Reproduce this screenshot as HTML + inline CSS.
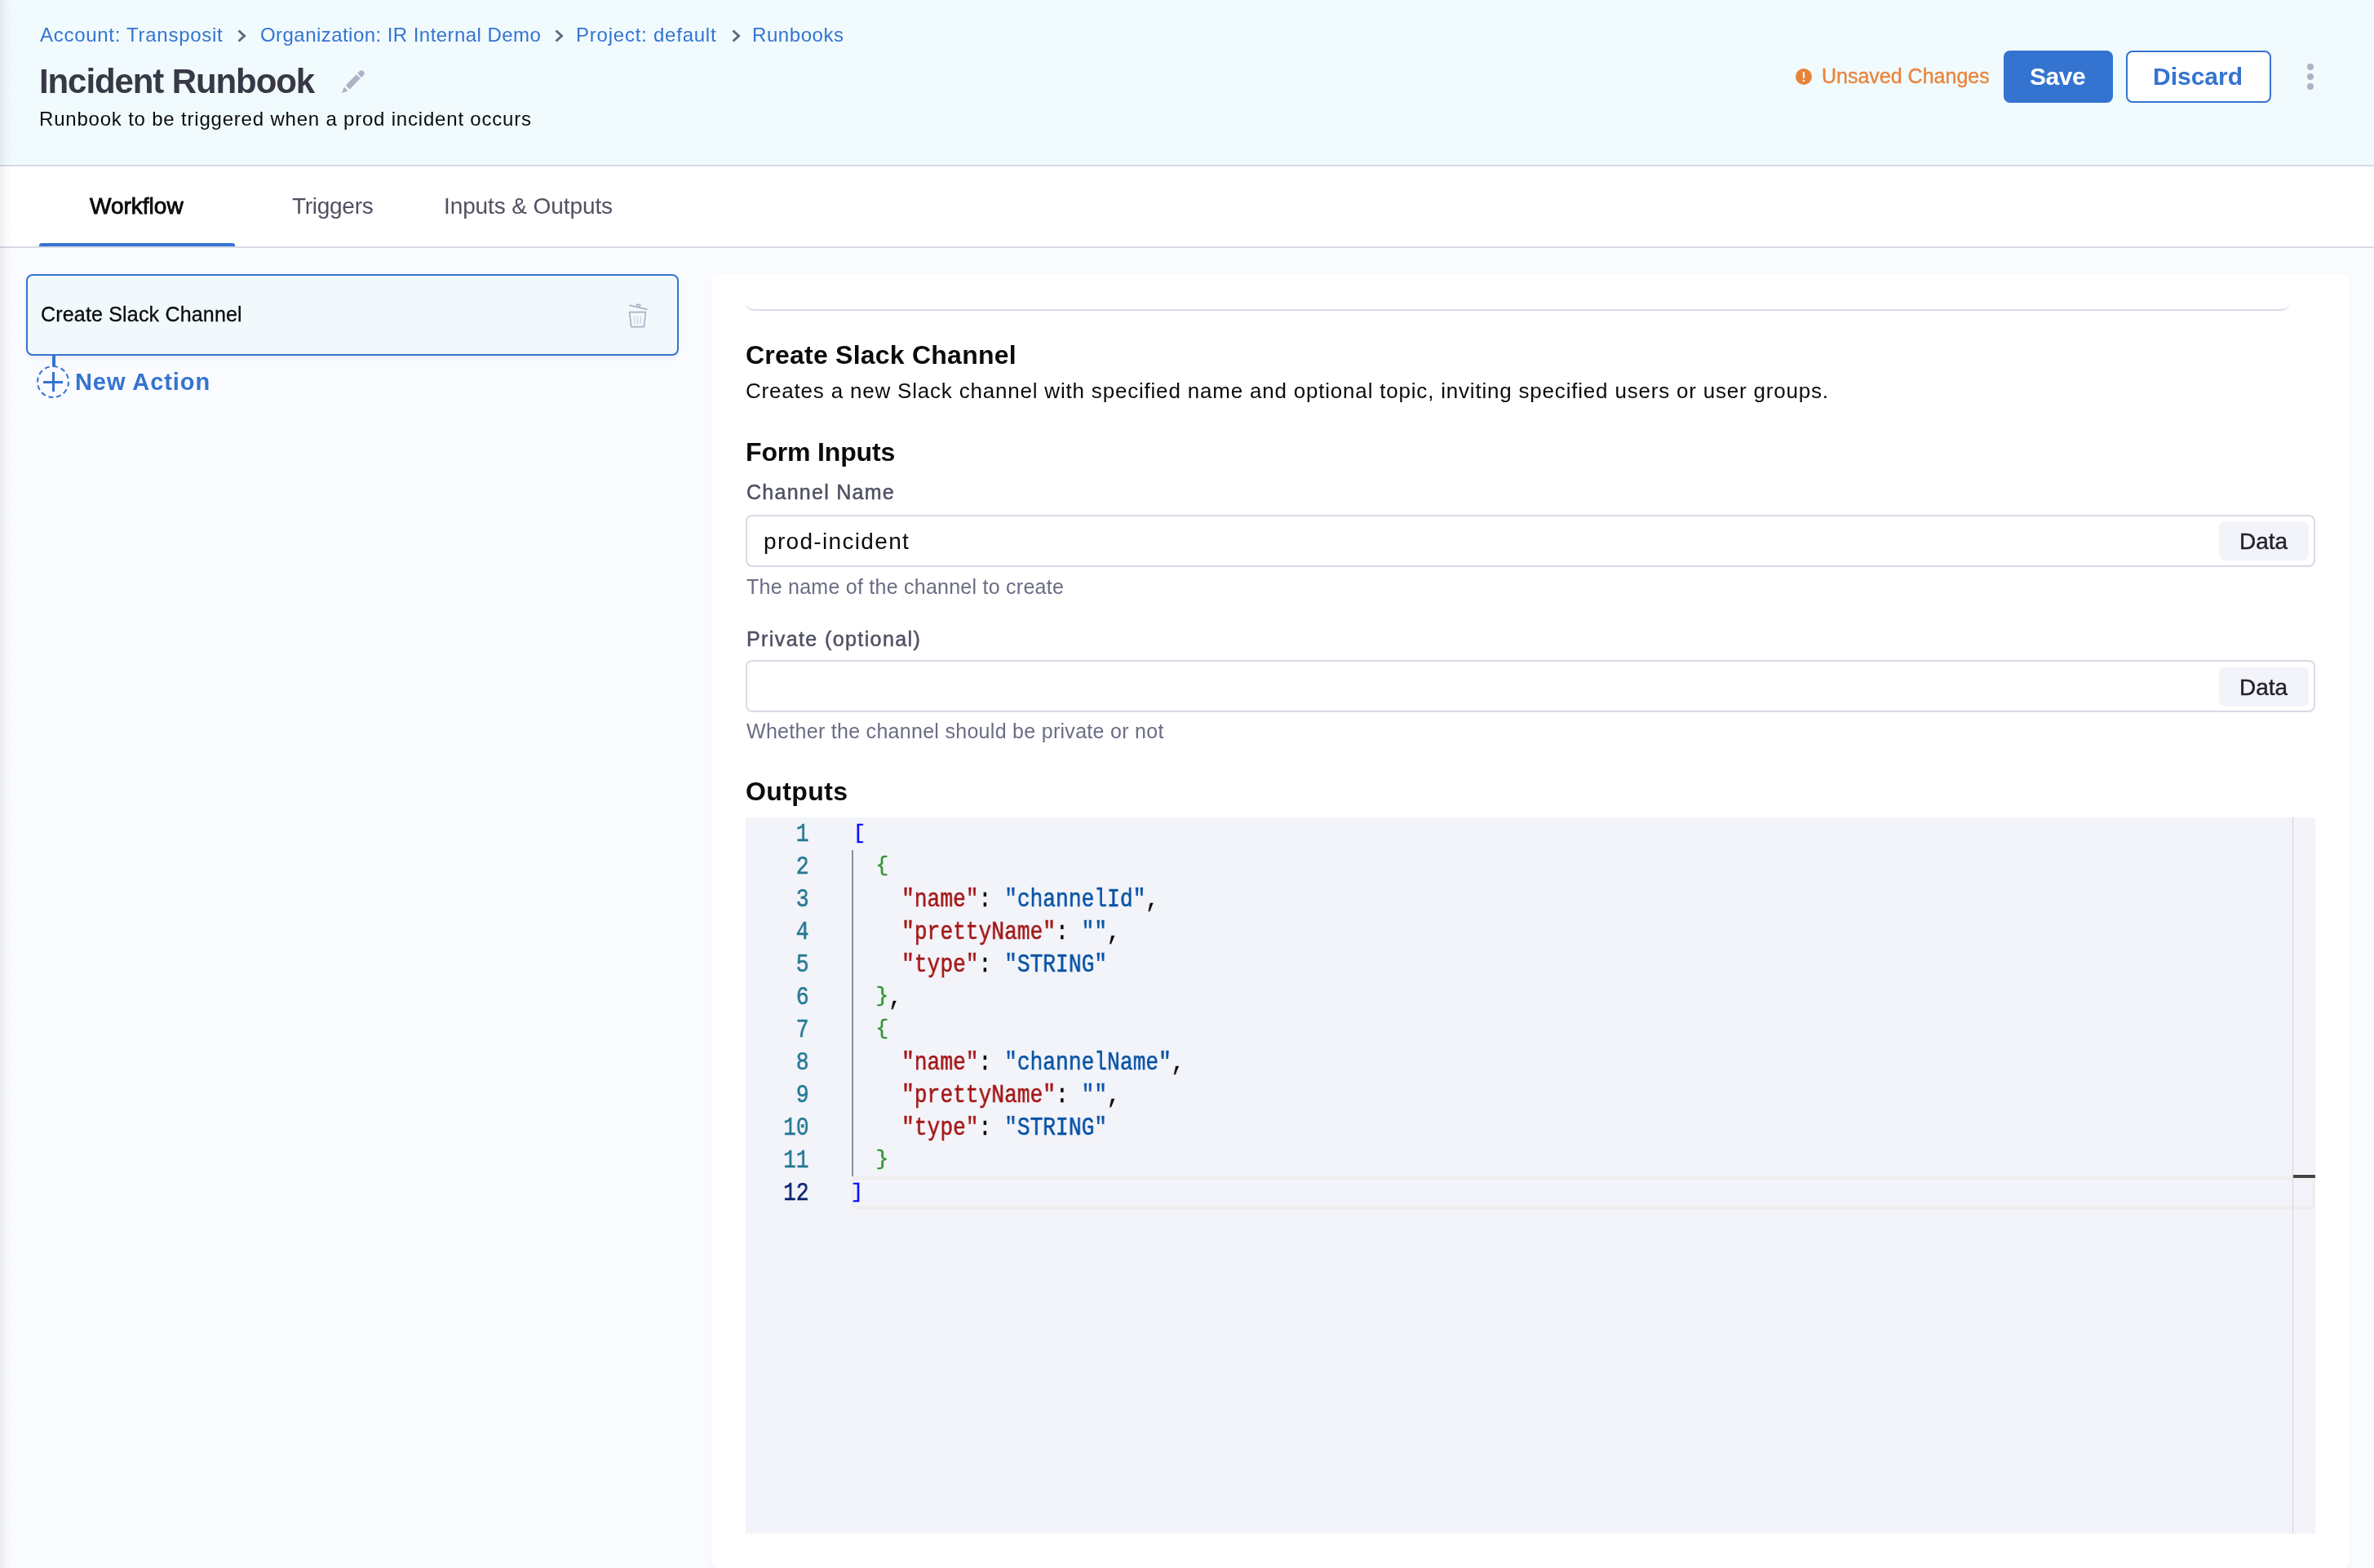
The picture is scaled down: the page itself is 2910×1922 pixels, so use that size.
<!DOCTYPE html>
<html><head><meta charset="utf-8">
<style>
html,body{margin:0;padding:0;}
body{width:2910px;height:1922px;overflow:hidden;position:relative;background:#FAFBFE;font-family:"Liberation Sans",sans-serif;color:#0B0B0D;}
.a{position:absolute;}
.t,#code,#ln{will-change:transform;}
.t{position:absolute;white-space:nowrap;line-height:1;}
.b{font-weight:bold;}
#hdr{left:0;top:0;width:2910px;height:202px;background:#F1FAFD;border-bottom:2px solid #D9DAE5;}
#tabs{left:0;top:204px;width:2910px;height:98px;background:#FFFFFF;border-bottom:2px solid #D9DAE5;}
.bc{font-size:24px;color:#3474D0;top:31.4px;}
.chev{position:absolute;top:36px;width:12px;height:16px;}
.btn{position:absolute;top:62px;height:64px;box-sizing:border-box;border-radius:8px;}
.tab{font-size:28px;top:238.6px;color:#4F5162;}
.lbl{font-size:25px;color:#4F5162;-webkit-text-stroke:0.5px #4F5162;}
.help{font-size:25px;color:#6B6D85;}
.inp{position:absolute;left:914px;width:1924px;height:64px;box-sizing:border-box;border:2px solid #D9DAE5;border-radius:8px;background:#FFFFFF;}
.data{position:absolute;left:2720px;width:110px;height:48px;background:#F3F3FA;border-radius:8px;}
.datat{font-size:28px;color:#22222A;-webkit-text-stroke:0.4px #22222A;}
#code{left:1042.4px;top:1003.4px;font-family:"Liberation Mono",monospace;font-size:30.5px;line-height:40px;white-space:pre;color:#000;transform:scaleX(0.8607);-webkit-text-stroke:0.5px;transform-origin:0 0;}
#ln{left:914px;width:77.5px;top:1003.4px;font-family:"Liberation Mono",monospace;font-size:30.5px;line-height:40px;white-space:pre;color:#237893;text-align:right;transform:scaleX(0.8607);-webkit-text-stroke:0.5px;transform-origin:100% 0;}
.k{color:#A31515}.s{color:#0451A5}.br1{color:#0000FF;display:inline-block;transform:translateX(4px) scaleY(0.802);transform-origin:50% 12.3px;}.br1b{color:#0000FF;display:inline-block;transform:translateX(0.8px) scaleY(0.802);transform-origin:50% 12.3px;}.br2{color:#319331;display:inline-block;transform:scaleY(0.815);transform-origin:50% 11.1px;}
</style></head>
<body>
<!-- header -->
<div id="hdr" class="a"></div>
<div class="t bc" style="left:49px;letter-spacing:0.72px;">Account: Transposit</div>
<svg class="chev" style="left:290px" viewBox="0 0 12 16"><path d="M2.5 1.5 L9.5 8 L2.5 14.5" fill="none" stroke="#5C6B7D" stroke-width="3"/></svg>
<div class="t bc" style="left:318.7px;letter-spacing:0.45px;">Organization: IR Internal Demo</div>
<svg class="chev" style="left:679.4px" viewBox="0 0 12 16"><path d="M2.5 1.5 L9.5 8 L2.5 14.5" fill="none" stroke="#5C6B7D" stroke-width="3"/></svg>
<div class="t bc" style="left:705.5px;letter-spacing:0.77px;">Project: default</div>
<svg class="chev" style="left:895.5px" viewBox="0 0 12 16"><path d="M2.5 1.5 L9.5 8 L2.5 14.5" fill="none" stroke="#5C6B7D" stroke-width="3"/></svg>
<div class="t bc" style="left:922px;letter-spacing:0.57px;">Runbooks</div>

<div class="t b" style="left:47.5px;top:78.9px;font-size:42px;color:#383946;letter-spacing:-1.1px;">Incident Runbook</div>
<svg class="a" style="left:419px;top:86px;width:28px;height:28px" viewBox="0 0 28 28"><path fill="#B0B1C4" d="M0 28 L2.7 20.5 L7.5 25.2 Z M4.8 18.6 L17.8 5.2 L22.8 10.1 L9.6 23.5 Z M19.1 3.8 L22 1 Q24.3 -0.6 26.5 1.5 Q28.6 3.8 27 6 L23.9 9 Z"/></svg>
<div class="t" style="left:48px;top:133.7px;font-size:24px;letter-spacing:0.8px;">Runbook to be triggered when a prod incident occurs</div>

<svg class="a" style="left:2201px;top:84px;width:20px;height:20px" viewBox="0 0 20 20"><circle cx="10" cy="10" r="10" fill="#E8833A"/><rect x="8.9" y="4" width="2.2" height="8" rx="0.8" fill="#F1F9FC"/><rect x="8.9" y="13.8" width="2.2" height="2.3" rx="0.6" fill="#F1F9FC"/></svg>
<div class="t" style="left:2233px;top:80.8px;font-size:25px;color:#E8833A;-webkit-text-stroke:0.3px #E8833A;">Unsaved Changes</div>
<div class="btn" style="left:2456px;width:134px;background:#3474D0;"></div>
<div class="t b" style="left:2488px;top:79.1px;font-size:30px;color:#FFFFFF;letter-spacing:-0.5px;">Save</div>
<div class="btn" style="left:2606px;width:178px;background:#FFFFFF;border:2px solid #3474D0;"></div>
<div class="t b" style="left:2639px;top:78.9px;font-size:30px;color:#3474D0;">Discard</div>
<div class="a" style="left:2828px;top:78px;width:8px;height:8px;border-radius:50%;background:#B0B1C4;"></div>
<div class="a" style="left:2828px;top:90px;width:8px;height:8px;border-radius:50%;background:#B0B1C4;"></div>
<div class="a" style="left:2828px;top:102px;width:8px;height:8px;border-radius:50%;background:#B0B1C4;"></div>

<!-- tabs -->
<div id="tabs" class="a"></div>
<div class="t tab" style="left:110px;color:#0B0B0D;letter-spacing:0px;-webkit-text-stroke:0.9px #0B0B0D;">Workflow</div>
<div class="t tab" style="left:358.4px;letter-spacing:-0.28px;">Triggers</div>
<div class="t tab" style="left:543.6px;letter-spacing:-0.1px;">Inputs &amp; Outputs</div>
<div class="a" style="left:48px;top:298px;width:240px;height:4px;background:#3474D0;border-radius:3px 3px 0 0;"></div>

<!-- left shadow strip -->
<div class="a" style="left:0;top:0;width:15px;height:1922px;background:linear-gradient(to right,rgba(30,30,60,0.065),rgba(30,30,60,0.025) 50%,rgba(30,30,60,0));"></div>

<!-- left panel -->
<div class="a" style="left:32px;top:336px;width:800px;height:100px;box-sizing:border-box;border:2px solid #3474D0;border-radius:8px;background:#F1F9FC;box-shadow:0 4px 6px -2px rgba(40,40,70,0.10);"></div>
<div class="t" style="left:50px;top:372.8px;font-size:25px;letter-spacing:0.18px;-webkit-text-stroke:0.3px #0B0B0D;">Create Slack Channel</div>
<svg class="a" style="left:768px;top:370px;width:28px;height:34px" viewBox="0 0 28 34"><g fill="none" stroke="#B0B1C4" stroke-width="1.7"><path d="M3.2 4.2 L25.6 9.4"/><path d="M12.3 5.6 L12.9 3 L16.6 3.8 L16 6.5"/><path d="M3.6 12.6 L23.4 12.6 L21.4 30.6 L5.8 30.6 Z" stroke-linejoin="round"/></g><g stroke="#D5D6E2" stroke-width="1.3"><path d="M9.3 17.5 L10 27"/><path d="M13.4 17.5 L13.4 27"/><path d="M17.6 17.5 L16.9 27"/></g></svg>
<div class="a" style="left:64px;top:436px;width:4px;height:13px;background:#3474D0;"></div>
<div class="a" style="left:45px;top:448px;width:40px;height:40px;box-sizing:border-box;border:2px dashed #3474D0;border-radius:50%;"></div>
<div class="a" style="left:53px;top:466.5px;width:24px;height:3px;background:#3474D0;"></div>
<div class="a" style="left:63.5px;top:456px;width:3px;height:24px;background:#3474D0;"></div>
<div class="t b" style="left:92px;top:453.5px;font-size:29px;color:#3474D0;letter-spacing:0.92px;">New Action</div>

<!-- right card -->
<div class="a" style="left:872px;top:336px;width:2008px;height:1586px;background:#FFFFFF;border-radius:8px;box-shadow:0 2px 4px rgba(40,40,70,0.05);"></div>
<div class="a" style="left:914px;top:331px;width:1892px;height:47.5px;border-bottom:2px solid #D9DAE5;border-radius:0 0 10px 10px;"></div>

<div class="t b" style="left:914px;top:418.7px;font-size:32px;letter-spacing:0.23px;">Create Slack Channel</div>
<div class="t" style="left:914px;top:465.6px;font-size:26px;letter-spacing:0.8px;">Creates a new Slack channel with specified name and optional topic, inviting specified users or user groups.</div>
<div class="t b" style="left:914px;top:538px;font-size:32px;letter-spacing:-0.17px;">Form Inputs</div>
<div class="t lbl" style="left:915px;top:591.4px;letter-spacing:1.26px;">Channel Name</div>
<div class="inp" style="top:631px;"></div>
<div class="t" style="left:936.3px;top:649.5px;font-size:28px;letter-spacing:1.33px;">prod-incident</div>
<div class="data" style="top:639px;"></div>
<div class="t datat" style="left:2745px;top:650px;">Data</div>
<div class="t help" style="left:915px;top:706.8px;letter-spacing:0.25px;">The name of the channel to create</div>
<div class="t lbl" style="left:915px;top:770.5px;letter-spacing:1.4px;">Private (optional)</div>
<div class="inp" style="top:809px;"></div>
<div class="data" style="top:818px;"></div>
<div class="t datat" style="left:2745px;top:829px;">Data</div>
<div class="t help" style="left:915px;top:884.4px;letter-spacing:0.29px;">Whether the channel should be private or not</div>
<div class="t b" style="left:914px;top:953.9px;font-size:32px;letter-spacing:0.4px;">Outputs</div>

<!-- editor -->
<div class="a" style="left:914px;top:1002px;width:1924px;height:878px;background:#F3F4F9;"></div>
<div class="a" style="left:1044px;top:1442px;width:1794px;height:40px;box-sizing:border-box;border:4px solid #EEEEEE;"></div>
<div class="a" style="left:1044px;top:1042px;width:2px;height:400px;background:#8E8E96;"></div>
<div class="a" style="left:2810px;top:1002px;width:1px;height:878px;background:#D3D2DB;"></div>
<div class="a" style="left:2811px;top:1439px;width:27px;height:4px;background:#454545;border-top:1px solid #FFF;border-bottom:1px solid #FFF;"></div>
<div id="ln" class="a">1
2
3
4
5
6
7
8
9
10
11
<span style="color:#0B216F">12</span></div>
<div id="code" class="a"><span class="br1">[</span>
  <span class="br2">{</span>
    <span class="k">"name"</span>: <span class="s">"channelId"</span>,
    <span class="k">"prettyName"</span>: <span class="s">""</span>,
    <span class="k">"type"</span>: <span class="s">"STRING"</span>
  <span class="br2">}</span>,
  <span class="br2">{</span>
    <span class="k">"name"</span>: <span class="s">"channelName"</span>,
    <span class="k">"prettyName"</span>: <span class="s">""</span>,
    <span class="k">"type"</span>: <span class="s">"STRING"</span>
  <span class="br2">}</span>
<span class="br1b">]</span></div>
</body></html>
